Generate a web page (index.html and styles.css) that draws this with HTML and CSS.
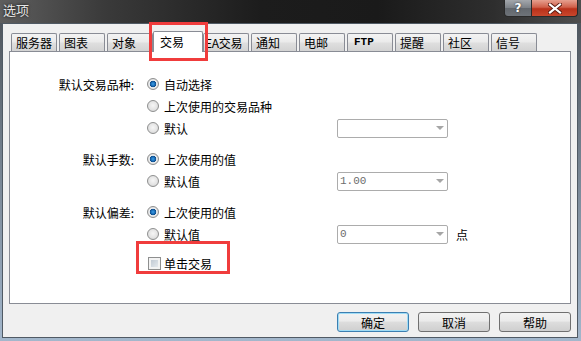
FILE: index.html
```html
<!DOCTYPE html>
<html lang="zh-CN">
<head>
    <meta charset="UTF-8">
    <meta name="viewport" content="width=device-width, initial-scale=1.0">
    <title>选项</title>
    <link rel="stylesheet" href="styles.css">
</head>
<body>
<div class="window">
    <div class="titlebar">
        <span class="title">选项</span>
        <div class="caption">
            <span class="cap help">?</span>
            <span class="cap close">
                <svg width="14" height="11" viewBox="0 0 14 11">
                    <path d="M2 1.5 L12 9.5 M12 1.5 L2 9.5" stroke="#5a1a10" stroke-width="4" stroke-linecap="square"/>
                    <path d="M2 1.5 L12 9.5 M12 1.5 L2 9.5" stroke="#fff" stroke-width="2.2" stroke-linecap="square"/>
                </svg>
            </span>
        </div>
    </div>
    <div class="client">
        <ul class="tabs">
            <li>服务器</li>
            <li>图表</li>
            <li>对象</li>
            <li class="active">交易</li>
            <li class="narrow">EA交易</li>
            <li>通知</li>
            <li>电邮</li>
            <li class="latin">FTP</li>
            <li>提醒</li>
            <li>社区</li>
            <li>信号</li>
        </ul>
        <div class="panel">
            <div class="group">
                <div class="row">
                    <div class="label">默认交易品种:</div>
                    <div class="opt"><span class="radio checked"></span>自动选择</div>
                </div>
                <div class="row">
                    <div class="label"></div>
                    <div class="opt"><span class="radio"></span>上次使用的交易品种</div>
                </div>
                <div class="row">
                    <div class="label"></div>
                    <div class="opt"><span class="radio"></span>默认</div>
                    <div class="combo"></div>
                </div>
            </div>
            <div class="group">
                <div class="row">
                    <div class="label">默认手数:</div>
                    <div class="opt"><span class="radio checked"></span>上次使用的值</div>
                </div>
                <div class="row">
                    <div class="label"></div>
                    <div class="opt"><span class="radio"></span>默认值</div>
                    <div class="combo">1.00</div>
                </div>
            </div>
            <div class="group">
                <div class="row">
                    <div class="label">默认偏差:</div>
                    <div class="opt"><span class="radio checked"></span>上次使用的值</div>
                </div>
                <div class="row">
                    <div class="label"></div>
                    <div class="opt"><span class="radio"></span>默认值</div>
                    <div class="combo">0</div>
                    <span class="unit">点</span>
                </div>
            </div>
            <div class="row check-row">
                <div class="label"></div>
                <div class="opt"><span class="check"></span>单击交易</div>
            </div>
        </div>
        <div class="buttons">
            <div class="btn default">确定</div>
            <div class="btn">取消</div>
            <div class="btn">帮助</div>
        </div>
    </div>
    <div class="mark mark-tab"></div>
    <div class="mark mark-check"></div>
</div>
</body>
</html>
```

FILE: styles.css
```css
* {
    box-sizing: border-box;
}

body {
    margin: 0;
    width: 581px;
    height: 341px;
    overflow: hidden;
    font-family: 'Noto Sans CJK SC', sans-serif;
    font-size: 12px;
    color: #000;
}

.window {
    position: relative;
    height: 341px;
    background: linear-gradient(#4a4f55 0, #6f7b88 40%, #a3b7cc 100%);
}

.titlebar {
    display: flex;
    justify-content: space-between;
    height: 23px;
    background: linear-gradient(90deg, #5e5e5e 0%, #3a3a3a 18%, #1c1c1c 45%, #1a1a1a 65%, #2e2e2e 85%, #4e4e4e 100%);
}

.title {
    padding: 2px 0 0 3px;
    font-size: 13px;
    line-height: 16px;
    color: #e6e6e6;
    text-shadow: 0 0 3px #000;
}

.caption {
    display: flex;
    height: 17px;
    margin-right: 3px;
}

.cap {
    display: flex;
    align-items: center;
    justify-content: center;
    border: 1px solid #2a2a2a;
    border-top: none;
    color: #fff;
}

.help {
    width: 28px;
    border-radius: 0 0 0 4px;
    background: linear-gradient(#a3a7ac, #7d8288 48%, #62676d 52%, #6e7379);
    font-family: 'DejaVu Sans', sans-serif;
    font-weight: bold;
    font-size: 12px;
    text-shadow: 0 0 2px #222;
}

.close {
    width: 46px;
    border-left: none;
    border-radius: 0 0 4px 0;
    background: linear-gradient(#e6a08f, #d0604a 45%, #b9311a 55%, #c9472c);
}

.client {
    width: 576px;
    height: 315px;
    margin-left: 2px;
    padding: 9px 6px 0;
    border: 1px solid #505a64;
    background: #f0f0f0;
}

.tabs {
    display: flex;
    gap: 2px;
    height: 18px;
    margin: 0 0 0 2px;
    padding: 0;
    list-style: none;
}

.tabs li {
    position: relative;
    width: 46px;
    height: 18px;
    padding: 0 0 0 4px;
    border: 1px solid #898c95;
    border-bottom: none;
    border-radius: 2px 2px 0 0;
    line-height: 17px;
    white-space: nowrap;
    overflow: hidden;
    background: linear-gradient(#f3f3f3 0, #ebebeb 45%, #dedede 55%, #d3d3d3 100%);
}

.tabs li.narrow {
    padding-left: 1px;
    letter-spacing: -0.3px;
}

.tabs li.latin {
    font-family: 'Liberation Mono', monospace;
    font-weight: bold;
    font-size: 11px;
    padding-left: 6px;
}

.tabs li.active {
    z-index: 1;
    width: 50px;
    height: 21px;
    margin: -2px -2px 0;
    padding-left: 6px;
    line-height: 19px;
    background: #fff;
}

.panel {
    height: 253px;
    padding: 21px 0 0 0;
    border: 1px solid #898c95;
    background: #fff;
}

.group + .group {
    margin-top: 9px;
}

.row {
    display: flex;
    align-items: center;
    height: 22px;
}

.label {
    width: 124px;
    text-align: right;
}

.opt {
    display: flex;
    align-items: center;
    width: 190px;
    margin-left: 13px;
}

.radio {
    width: 12px;
    height: 12px;
    margin-right: 5px;
    border: 1px solid #8e8f8f;
    border-radius: 50%;
    background: radial-gradient(circle at 50% 45%, #f6f6f6 0, #e4e4e4 55%, #cdcdcd 100%);
}

.radio.checked {
    background: radial-gradient(circle at 50% 50%, #3da0e6 0, #1a6cb8 2px, #0e4c88 3px, #f4f4f4 3.6px, #e2e2e2 4.6px, #cdcdcd 100%);
}

.check-row {
    margin-top: 7px;
}

.check {
    width: 13px;
    height: 13px;
    margin: 0 3px 0 1px;
    border: 1px solid #8e8f8f;
    background: linear-gradient(135deg, #b8c2cd, #eef1f4);
    box-shadow: inset 0 0 0 2px #f3f3f3;
}

.combo {
    display: flex;
    align-items: center;
    justify-content: space-between;
    width: 111px;
    height: 19px;
    padding: 0 3px 0 2px;
    border: 1px solid #acacac;
    border-radius: 2px;
    background: #fff;
    font-family: 'Liberation Mono', monospace;
    font-size: 11px;
    color: #6d6d6d;
}

.combo::after {
    content: "";
    margin-left: auto;
    border-left: 4px solid transparent;
    border-right: 4px solid transparent;
    border-top: 4px solid #a6a6a6;
}

.unit {
    margin-left: 8px;
}

.buttons {
    display: flex;
    justify-content: flex-end;
    gap: 9px;
    margin-top: 8px;
}

.btn {
    display: flex;
    align-items: center;
    justify-content: center;
    width: 72px;
    height: 20px;
    border: 1px solid #707070;
    border-radius: 3px;
    background: linear-gradient(#f2f2f2 0, #ebebeb 45%, #dddddd 50%, #cfcfcf 100%);
}

.btn.default {
    border-color: #3c7fb1;
    box-shadow: inset 0 0 0 1px #9fdcf6;
}

.mark {
    position: absolute;
    z-index: 2;
    border: 3px solid #f03c3c;
}

.mark-tab {
    left: 149px;
    top: 22px;
    width: 59px;
    height: 39px;
}

.mark-check {
    left: 136px;
    top: 241px;
    width: 94px;
    height: 33px;
}
```
